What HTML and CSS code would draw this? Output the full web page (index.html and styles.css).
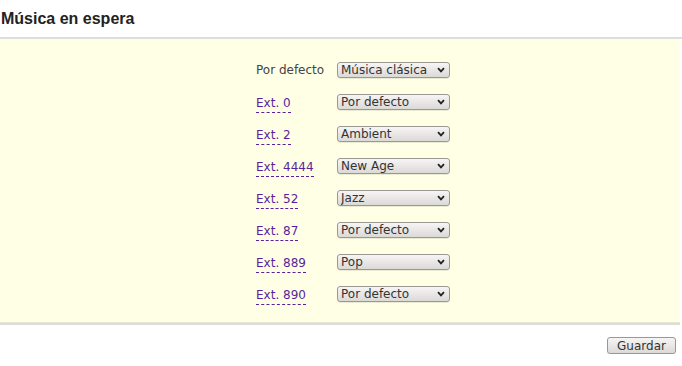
FILE: index.html
```
<!DOCTYPE html>
<html>
  <head>
    <title>Música en espera</title>
    <meta charset="UTF-8">
    <link rel="stylesheet" href="styles.css">
  </head>
  <body>
    <h1 class="title">Música en espera</h1>
    <div class="panel">
      <div class="moh">
        <span class="lbl">Por defecto</span>
        <span class="sel"><select><option>Música clásica</option></select><svg viewBox="0 0 8 6"><path d="M1 1.2 4 4.4 7 1.2"/></svg></span>
        <a class="ext">Ext. 0</a>
        <span class="sel"><select><option>Por defecto</option></select><svg viewBox="0 0 8 6"><path d="M1 1.2 4 4.4 7 1.2"/></svg></span>
        <a class="ext">Ext. 2</a>
        <span class="sel"><select><option>Ambient</option></select><svg viewBox="0 0 8 6"><path d="M1 1.2 4 4.4 7 1.2"/></svg></span>
        <a class="ext">Ext. 4444</a>
        <span class="sel"><select><option>New Age</option></select><svg viewBox="0 0 8 6"><path d="M1 1.2 4 4.4 7 1.2"/></svg></span>
        <a class="ext">Ext. 52</a>
        <span class="sel"><select><option>Jazz</option></select><svg viewBox="0 0 8 6"><path d="M1 1.2 4 4.4 7 1.2"/></svg></span>
        <a class="ext">Ext. 87</a>
        <span class="sel"><select><option>Por defecto</option></select><svg viewBox="0 0 8 6"><path d="M1 1.2 4 4.4 7 1.2"/></svg></span>
        <a class="ext">Ext. 889</a>
        <span class="sel"><select><option>Pop</option></select><svg viewBox="0 0 8 6"><path d="M1 1.2 4 4.4 7 1.2"/></svg></span>
        <a class="ext">Ext. 890</a>
        <span class="sel"><select><option>Por defecto</option></select><svg viewBox="0 0 8 6"><path d="M1 1.2 4 4.4 7 1.2"/></svg></span>
      </div>
    </div>
    <div class="actions">
      <button class="btn">Guardar</button>
    </div>
  </body>
</html>
```
FILE: styles.css
```
html {
  background: white;
}
body {
  margin: 0;
  font-family: "DejaVu Sans", sans-serif;
  font-size: 12px;
  color: #333;
}
.title {
  margin: 0;
  padding: 10px 1px 0;
  height: 27px;
  font-family: "Liberation Sans", Arial, sans-serif;
  font-size: 16px;
  font-weight: bold;
  color: #222;
  line-height: 18px;
  border-bottom: 2px solid #dedede;
}
.panel {
  background: #ffffe6;
  border-bottom: 2px solid #dcdcdc;
  box-shadow: inset 0 -1px 0 #e8e8d0;
  width: 680px;
  padding: 23px 0 21px;
}
.moh {
  display: grid;
  grid-template-columns: 81px 113px;
  grid-auto-rows: 16px;
  row-gap: 16px;
  justify-content: center;
  align-items: center;
  padding-left: 26px;
}
.lbl {
  color: #444;
  line-height: 14px;
}
.ext {
  justify-self: start;
  color: #5b1f9e;
  line-height: 14px;
  padding-bottom: 2px;
  margin-top: 4px;
  border-bottom: 1px dashed #5b1f9e;
  cursor: pointer;
}
.sel {
  position: relative;
  display: block;
  height: 16px;
}
.sel select {
  appearance: none;
  display: block;
  width: 113px;
  height: 16px;
  margin: 0;
  padding: 0 0 0 3px;
  font-family: "DejaVu Sans", sans-serif;
  font-size: 12px;
  line-height: 14px;
  color: #333;
  background: linear-gradient(#f6f5f4, #dcdad7);
  border: 1px solid #9a9893;
  border-radius: 3px;
  box-shadow: 0 1px 0 rgba(0,0,0,0.08);
}
.sel svg {
  position: absolute;
  right: 5px;
  top: 5px;
  width: 8px;
  height: 6px;
  fill: none;
  stroke: #222;
  stroke-width: 1.8;
}
.actions {
  display: flex;
  justify-content: flex-end;
  padding: 12px 6px 0 0;
}
.btn {
  font-family: "DejaVu Sans", sans-serif;
  font-size: 12px;
  color: #333;
  height: 17px;
  width: 69px;
  padding: 0;
  line-height: 14px;
  background: linear-gradient(#f6f5f4, #dcdad7);
  border: 1px solid #9a9893;
  border-radius: 3px;
  box-shadow: 0 1px 0 rgba(0,0,0,0.08);
}
```
